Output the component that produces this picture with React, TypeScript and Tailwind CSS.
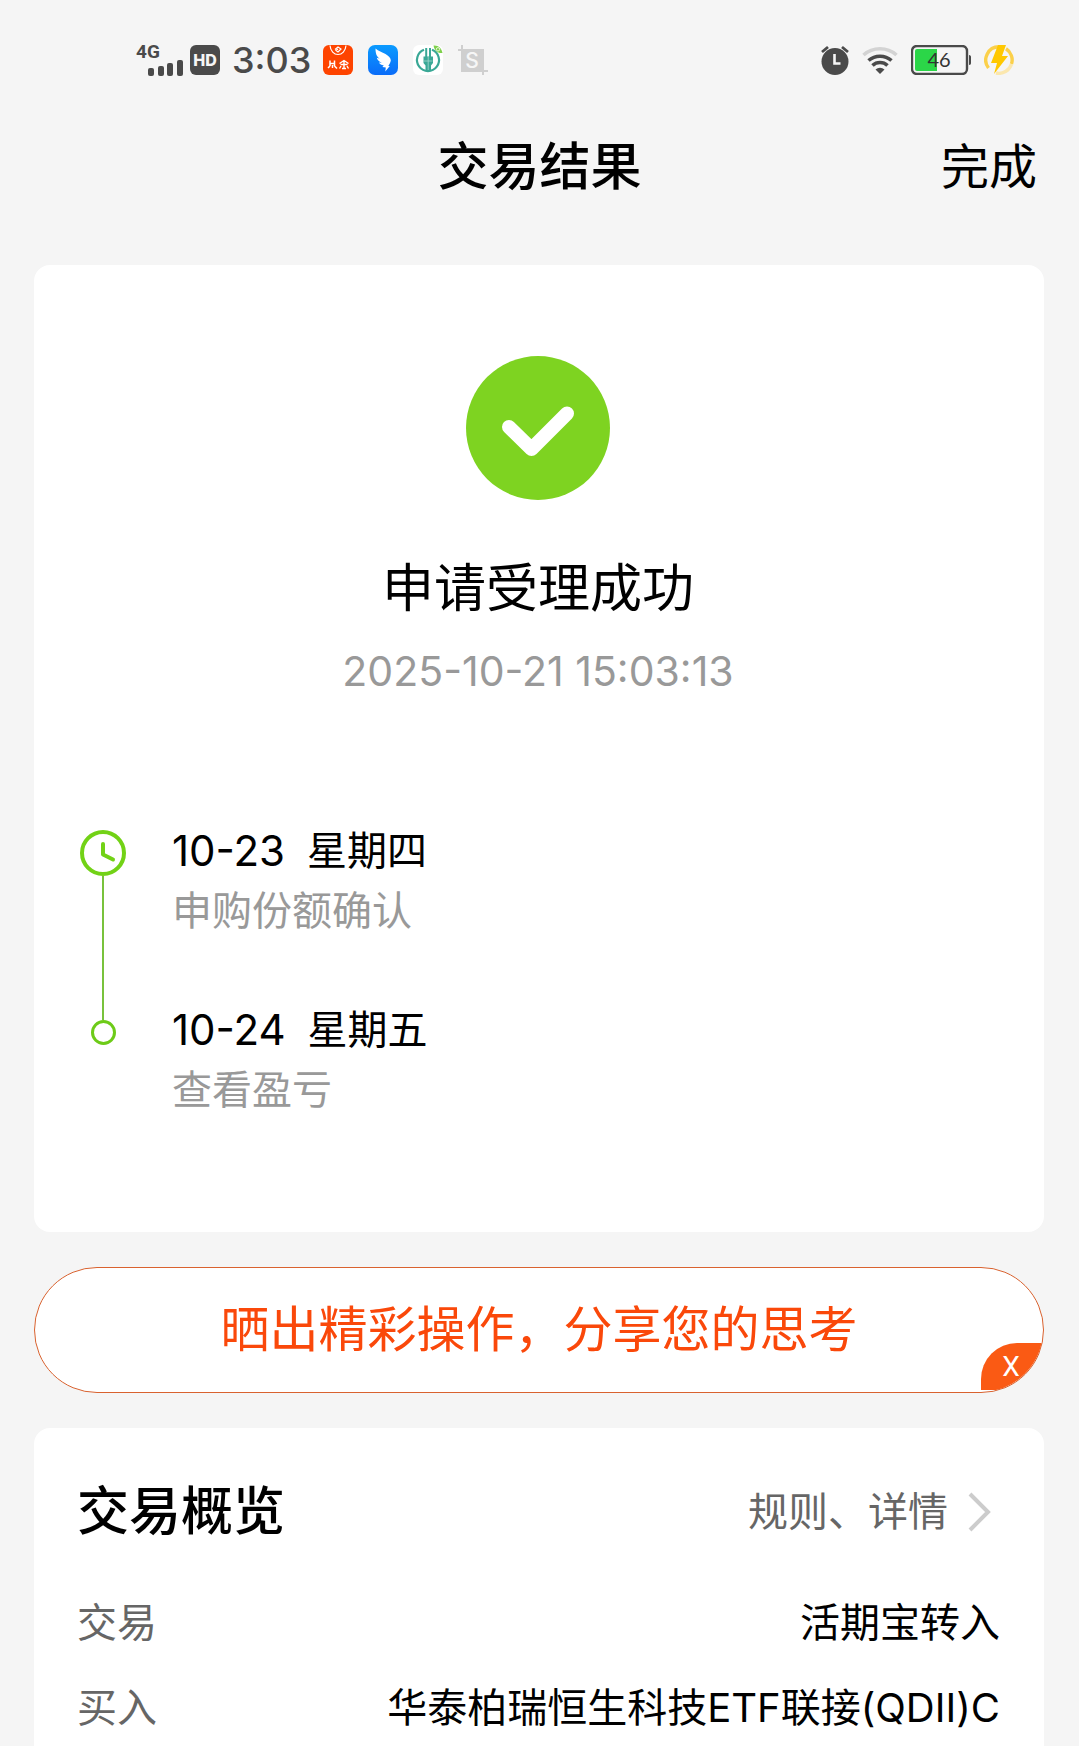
import React from 'react';

const steps = [
  { date: '10-23', day: '星期四', note: '申购份额确认' },
  { date: '10-24', day: '星期五', note: '查看盈亏' },
];

const rows = [
  { label: '交易', value: '活期宝转入' },
  { label: '买入', value: '华泰柏瑞恒生科技ETF联接(QDII)C' },
];

function SignalIcon() {
  return (
    <svg className="w-9 h-4" viewBox="0 0 36 16" fill="#4a4a4a">
      <rect x="0" y="8" width="6" height="8" rx="2" />
      <rect x="10" y="6" width="6" height="10" rx="2" />
      <rect x="19" y="3" width="6" height="13" rx="2" />
      <rect x="29" y="0" width="6" height="16" rx="2" />
    </svg>
  );
}

function MarketAppIcon() {
  return (
    <svg className="size-[30px]" viewBox="0 0 30 30" fill="none" stroke="#fff">
      <rect width="30" height="30" rx="6" fill="#fe4400" stroke="none" />
      <path d="M7 0.5c0.5 5.500 4 9 8 9s7.500-3.500 8-9" strokeWidth="1.200" />
      <path d="M12 4.500l3-2.500 3 2-3 3-2-1.500 2-1.500" strokeWidth="1.200" />
      <path d="M7 15.500v5.500M11.500 15.500v5.500M7 18.500h4.500M5 23l2-2M14 23.500l-2.500-2.500M9.500 20v3" strokeWidth="1.500" />
      <path d="M16.500 18.500l4.500-3 4.500 3M17.500 19.500h7M21 16v7.500M18 21l-1.500 2.500M24 21l1.500 2.500M19 23.500h4" strokeWidth="1.400" />
    </svg>
  );
}

function WingAppIcon() {
  return (
    <svg className="size-[30px]" viewBox="0 0 30 30">
      <defs>
        <linearGradient id="wing" x1="0" y1="0" x2="0" y2="1">
          <stop offset="0" stopColor="#0b9bff" />
          <stop offset="1" stopColor="#0a6cf8" />
        </linearGradient>
      </defs>
      <rect width="30" height="30" rx="7" fill="url(#wing)" />
      <path
        d="M7.500 3.500c3 2.500 6.500 3.500 10 5.500 3 1.800 5.500 4 5.300 6.500-0.300 2.200-1.500 4-2.500 5.500h1.500l-4.500 5.500 0.500-4-3.500-0.500 1.500-1.500c-2.500-0.300-4-1.500-5-3l3 0.300c-3-1.300-4.500-3-5-5l3 1c-3-2-4.300-5-4.300-10.300z"
        fill="#fff"
      />
    </svg>
  );
}

function BankAppIcon() {
  return (
    <svg className="size-[30px] overflow-visible" viewBox="0 0 30 30" fill="none">
      <rect width="30" height="30" rx="6" fill="#fff" />
      <path d="M11 4.800a11 11 0 1 0 8 0" stroke="#3aa896" strokeWidth="2.200" />
      <path d="M13.200 3v10M17 3v10" stroke="#3aa896" strokeWidth="2" />
      <path d="M10.500 11.500h9.500v6.500l-2 2.500v5.500h-5.500v-5.500l-2-2.500z" fill="#3aa896" />
      <path d="M15.200 12v13M11 16h8.500" stroke="#a6d8cf" strokeWidth="0.800" />
      <path d="M20.500 0.500c5-0.500 8 2.500 9 7.500-5 0.500-8-2.500-9-7.500z" fill="#7ed04b" />
      <circle cx="25" cy="4.300" r="1.700" stroke="#e6f8d8" />
    </svg>
  );
}

function CropAppIcon() {
  return (
    <svg className="size-[30px]" viewBox="0 0 30 30">
      <path d="M3 0h2v4h21v21h4v2h-4v3h-2v-3H3V6H0V4h3z" fill="#cfcfcf" />
      <text x="14" y="23" textAnchor="middle" fontSize="21" fontWeight="500" fill="#f6f6f6" fontFamily="Inter, sans-serif">
        S
      </text>
    </svg>
  );
}

function AlarmIcon() {
  return (
    <svg className="w-7 h-[30px]" viewBox="0 0 28 30" fill="none" stroke="#4a4a4a">
      <circle cx="14" cy="16.500" r="13.500" fill="#4a4a4a" stroke="none" />
      <path d="M1 7l6-5M27 7l-6-5" strokeWidth="2.800" />
      <path d="M13.500 9v9.500h6" stroke="#f5f5f5" strokeWidth="2.600" />
    </svg>
  );
}

function WifiIcon() {
  return (
    <svg className="w-9 h-7" viewBox="0 0 36 28" fill="none" strokeWidth="3.600">
      <path d="M1.500 9a25 25 0 0 1 33 0" stroke="#d3d3d3" />
      <path d="M6.500 14.500a17.500 17.500 0 0 1 23 0" stroke="#4a4a4a" />
      <path d="M10.500 19.500a11 11 0 0 1 15 0" stroke="#4a4a4a" />
      <path d="M13.500 23.500a7 7 0 0 1 9 0l-4.500 4.500z" fill="#4a4a4a" />
    </svg>
  );
}

function BatteryIcon() {
  return (
    <svg className="w-[60px] h-[30px]" viewBox="0 0 60 30">
      <rect x="1" y="1" width="55" height="28" rx="5" fill="#f5f5f5" stroke="#4a4a4a" strokeWidth="2.400" />
      <path d="M6 4h20v22H6a2 2 0 0 1-2-2V6a2 2 0 0 1 2-2z" fill="#2bd648" />
      <path d="M58 10c1.500 0 2 1 2 2v6c0 1-0.500 2-2 2z" fill="#4a4a4a" />
      <text x="28" y="22" textAnchor="middle" fontSize="20" fill="#333" fontFamily="Lato, sans-serif">
        46
      </text>
    </svg>
  );
}

function BoltIcon() {
  return (
    <svg className="size-[30px]" viewBox="0 0 30 30" fill="none">
      <path d="M15 1.800A13.200 13.200 0 0 0 4.500 23" stroke="#fbd04a" strokeWidth="3.400" />
      <path d="M22 3.800A13.200 13.200 0 0 1 27.500 19" stroke="#fbd04a" strokeWidth="3.400" />
      <path d="M27.500 19A13.200 13.200 0 0 1 12 28" stroke="#fbe7ae" strokeWidth="3.400" />
      <path d="M14 0h8l-4 11h6L10 29l3-11H7z" fill="#ffc800" />
    </svg>
  );
}

function StatusBar() {
  return (
    <div className="flex items-center justify-between h-[120px] pl-[136px] pr-[65px] text-[#4a4a4a]">
      <div className="flex items-center">
        <div className="flex flex-col w-12 h-8">
          <span className="text-[19px] leading-4 font-bold font-[Roboto,sans-serif]">4G</span>
          <div className="flex justify-end">
            <SignalIcon />
          </div>
        </div>
        <span className="flex items-center justify-center ml-1.5 size-[30px] rounded-md bg-[#4a4a4a] text-[#f5f5f5] text-base font-extrabold">
          HD
        </span>
        <span className="ml-3 text-[36px] leading-[48px] font-medium">3:03</span>
        <div className="flex items-center gap-[15px] ml-3">
          <MarketAppIcon />
          <WingAppIcon />
          <BankAppIcon />
          <CropAppIcon />
        </div>
      </div>
      <div className="flex items-center gap-[13px]">
        <AlarmIcon />
        <WifiIcon />
        <BatteryIcon />
        <BoltIcon />
      </div>
    </div>
  );
}

function SuccessIcon() {
  return (
    <svg className="size-36" viewBox="0 0 144 144" fill="none">
      <circle cx="72" cy="72" r="72" fill="#7ed321" />
      <path d="M43 71l22.500 22L101 57.500" stroke="#fff" strokeWidth="14" strokeLinecap="round" strokeLinejoin="round" />
    </svg>
  );
}

function ClockIcon() {
  return (
    <svg className="size-[46px] shrink-0" viewBox="0 0 46 46" fill="none" stroke="#72d216" strokeWidth="4">
      <circle cx="23" cy="23" r="21" />
      <path d="M23 14v10.500l10 5" strokeLinecap="round" strokeLinejoin="round" />
    </svg>
  );
}

function Timeline() {
  return (
    <ol className="mt-[126px]">
      {steps.map((step, i) => (
        <li key={step.date} className="flex gap-[46px]">
          {i === 0 ? (
            <div className="flex flex-col items-center w-[46px] pt-[9px]">
              <ClockIcon />
              <div className="flex-1 w-0.5 bg-[#78c23c]" />
            </div>
          ) : (
            <div className="flex flex-col items-center w-[46px]">
              <div className="w-0.5 h-5 bg-[#78c23c]" />
              <div className="size-[25px] rounded-full border-3 border-[#6dcb18]" />
            </div>
          )}
          <div className={i < steps.length - 1 ? 'pb-[59px]' : ''}>
            <p className="flex items-center gap-[22px] h-[60px] text-[40px] leading-[60px] text-black">
              <span className="text-[42px]">{step.date}</span>
              <span>{step.day}</span>
            </p>
            <p className="text-[40px] leading-[60px] text-[#999]">{step.note}</p>
          </div>
        </li>
      ))}
    </ol>
  );
}

export default function App() {
  return (
    <div className="flex flex-col min-h-screen bg-[#f5f5f5] font-[Inter,'Noto_Sans_CJK_SC',sans-serif]">
      <StatusBar />

      {/* Title bar */}
      <header className="grid grid-cols-3 items-center h-[94px] px-[42px] text-black">
        <h1 className="col-start-2 text-center text-[51px] leading-[60px] font-medium">交易结果</h1>
        <button type="button" className="justify-self-end text-[48px] leading-[60px]">
          完成
        </button>
      </header>

      <main className="flex flex-col flex-1 gap-[35px] pt-[51px] pl-[34px] pr-[35px]">
        {/* Result */}
        <section className="rounded-2xl bg-white pl-[46px] pr-12 pt-[91px] pb-28">
          <div className="flex flex-col items-center">
            <SuccessIcon />
            <h2 className="mt-[59px] text-[52px] leading-[60px] text-black">申请受理成功</h2>
            <p className="mt-7 text-[41px] leading-[48px] text-[#999]">2025-10-21 15:03:13</p>
          </div>
          <Timeline />
        </section>

        {/* Share banner */}
        <div className="relative overflow-hidden rounded-full border border-[#d9622f] bg-white">
          <button type="button" className="w-full h-[124px] text-[49px] leading-[60px] text-[#fa480a]">
            晒出精彩操作，分享您的思考
          </button>
          <button
            type="button"
            aria-label="关闭"
            className="absolute right-0 bottom-0.5 w-[62px] h-[47px] pr-0.5 rounded-tl-[36px] bg-[#fa5a14] text-white text-[28px] leading-[47px] font-[Roboto,sans-serif]"
          >
            X
          </button>
        </div>

        {/* Overview */}
        <section className="flex-1 rounded-t-2xl bg-white pt-[54px] pl-[43px] pr-11">
          <div className="flex items-center justify-between h-[60px]">
            <h2 className="text-[52px] leading-[60px] font-medium text-black">交易概览</h2>
            <a href="#rules" className="flex items-center gap-5 pr-2 text-[40px] leading-[60px] text-[#666]">
              规则、详情
              <svg className="w-6 h-10" viewBox="0 0 24 40" fill="none" stroke="#ccc" strokeWidth="4">
                <path d="M2 2l18 18L2 38" />
              </svg>
            </a>
          </div>
          <dl className="flex flex-col gap-[25px] mt-[51px] text-[40px] leading-[60px]">
            {rows.map((row) => (
              <div key={row.label} className="flex justify-between">
                <dt className="text-[#666]">{row.label}</dt>
                <dd className="text-black">{row.value}</dd>
              </div>
            ))}
          </dl>
        </section>
      </main>
    </div>
  );
}
